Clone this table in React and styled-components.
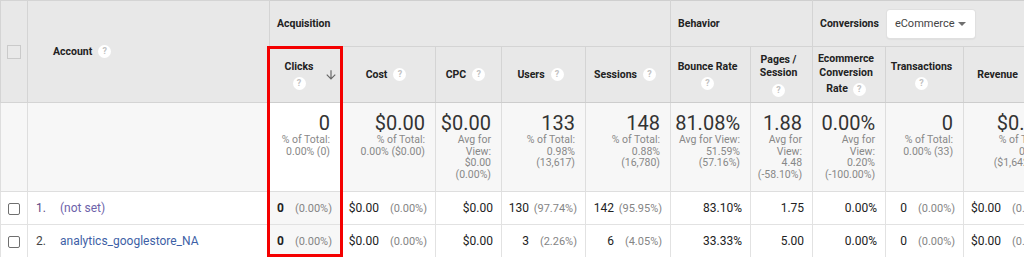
import React from "react";
import styled, { createGlobalStyle } from "styled-components";

const GlobalStyle = createGlobalStyle`
  html, body { margin: 0; padding: 0; background: #fff; }
  body { font-family: Roboto, "Liberation Sans", Arial, sans-serif; overflow: hidden; }
`;

const Frame = styled.div`
  position: relative;
  width: 1024px;
  height: 257px;
  overflow: hidden;
`;

const Table = styled.table`
  border-collapse: collapse;
  table-layout: fixed;
  width: 1057px;
  border-top: 1px solid #cfcfcf;
`;

const HeadCell = styled.th`
  background: #e8e8e8;
  border: 1px solid #d4d4d4;
  color: #222;
  font-size: 10.5px;
  font-weight: 700;
  padding: 0;
  vertical-align: middle;
`;

const GroupCell = styled(HeadCell)`
  text-align: left;
  padding-left: 7px;
  border-top: none;
`;

const GroupRow = styled.tr`
  height: 46px;
`;

const SubRow = styled.tr`
  height: 56px;
`;

const TotalRow = styled.tr`
  height: 89px;
`;

const DataRow = styled.tr`
  height: 33px;
`;

const ColHead = styled(HeadCell)`
  text-align: center;
  padding: 0 ${(p) => p.$pr || "10px"} 0 4px;
  border-bottom: 1px solid #cdcdcd;
`;

const SortHead = styled(HeadCell)`
  padding: 0 4px;
  border-bottom: 1px solid #cdcdcd;
`;

const SortInner = styled.div`
  display: flex;
  align-items: center;
`;

const SortLabel = styled.div`
  flex: 1;
  text-align: center;
`;

const Line = styled.div`
  line-height: ${(p) => p.$lh || "13px"};
  white-space: nowrap;
`;

const RateLine = styled.div`
  line-height: 16px;
  margin-top: 1px;
  white-space: nowrap;
  display: flex;
  align-items: center;
  justify-content: center;
  gap: 5px;
`;

const Help = styled.span`
  display: inline-block;
  width: 13px;
  height: 13px;
  border-radius: 50%;
  background: #fff;
  color: #c2c2c2;
  font-size: 9px;
  font-weight: 700;
  line-height: 13px;
  text-align: center;
  vertical-align: middle;
  margin-left: ${(p) => (p.$inline ? "6px" : "0")};
  margin-top: ${(p) => (p.$inline ? "-2px" : "0")};
`;

const HelpBlock = styled.div`
  margin-top: 4px;
  height: 13px;
  line-height: 13px;
`;

const CheckCell = styled(HeadCell)`
  text-align: center;
`;

const AccountHead = styled(HeadCell)`
  text-align: left;
  padding-left: 25px;
`;

const HeadBox = styled.span`
  display: inline-block;
  width: 12px;
  height: 12px;
  border: 1px solid #cacaca;
  background: #e9e9e9;
  vertical-align: middle;
`;

const ConvWrap = styled.div`
  display: flex;
  align-items: center;
  gap: 8px;
`;

const Dropdown = styled.div`
  display: flex;
  align-items: center;
  justify-content: space-between;
  width: 88px;
  height: 28px;
  box-sizing: border-box;
  padding: 0 9px 0 8px;
  background: #fff;
  border-radius: 3px;
  box-shadow: 0 0 0 1px #e0e0e0, 0 1px 2px rgba(0, 0, 0, 0.12);
  font-size: 11px;
  font-weight: 400;
  color: #444;
`;

const Caret = styled.span`
  width: 0;
  height: 0;
  border-left: 4px solid transparent;
  border-right: 4px solid transparent;
  border-top: 4px solid #6f6f6f;
`;

const TotalCell = styled.td`
  background: ${(p) => (p.$sorted ? "#fff" : "#f7f7f7")};
  border-left: 1px solid #dedede;
  border-right: 1px solid #dedede;
  border-bottom: 1px solid #dedede;
  text-align: right;
  vertical-align: top;
  padding: 9px ${(p) => (p.$sorted ? "12px" : "10px")} 0 4px;
`;

const Big = styled.div`
  font-size: 20px;
  line-height: 22px;
  color: #333;
  white-space: nowrap;
`;

const Sub = styled.div`
  font-size: 10.5px;
  line-height: 11.6px;
  color: #888;
  white-space: nowrap;
`;

const DataCell = styled.td`
  background: ${(p) => (p.$sorted ? "#f7f7f7" : "#fff")};
  border: 1px solid #e2e2e2;
  text-align: right;
  vertical-align: middle;
  padding: 0 ${(p) => (p.$sorted ? "10px" : "8px")} 0 4px;
  font-size: 12px;
  color: #222;
  white-space: nowrap;
`;

const Val = styled.span`
  font-weight: ${(p) => (p.$bold ? 700 : 400)};
`;

const Pct = styled.span`
  display: inline-block;
  min-width: 46px;
  margin-left: 2px;
  text-align: right;
  font-size: 11px;
  color: #858585;
`;

const CheckData = styled.td`
  border: 1px solid #e2e2e2;
  text-align: center;
  vertical-align: middle;
  padding: 0;
`;

const RowBox = styled.span`
  display: inline-block;
  width: 10px;
  height: 10px;
  border: 1px solid #6f6f6f;
  border-radius: 2px;
  background: #fff;
  vertical-align: middle;
`;

const AccountData = styled.td`
  border: 1px solid #e2e2e2;
  vertical-align: middle;
  padding: 0 0 0 8px;
  font-size: 12px;
  white-space: nowrap;
`;

const Num = styled.span`
  display: inline-block;
  width: 24px;
  color: ${(p) => p.$color};
`;

const Link = styled.a`
  color: ${(p) => p.$color};
  text-decoration: none;
`;

const BlankTotal = styled.td`
  background: #f7f7f7;
  border: 1px solid #dedede;
  border-top: none;
`;

const RedBox = styled.div`
  position: absolute;
  left: 267px;
  top: 46px;
  width: 76px;
  height: 211px;
  box-sizing: border-box;
  border: 3px solid #f40000;
  pointer-events: none;
`;

const ArrowDown = () => (
  <svg width="14" height="14" viewBox="0 0 24 24" fill="#666">
    <path d="M20 12l-1.41-1.41L13 16.17V4h-2v12.17l-5.58-5.59L4 12l8 8 8-8z" />
  </svg>
);

const cols = [
  { w: 73, key: "clicks", sorted: true, total: ["0", "% of Total:", "0.00% (0)"], rows: [["0", "(0.00%)"], ["0", "(0.00%)"]] },
  { w: 93, key: "cost", total: ["$0.00", "% of Total:", "0.00% ($0.00)"], rows: [["$0.00", "(0.00%)"], ["$0.00", "(0.00%)"]] },
  { w: 66, key: "cpc", total: ["$0.00", "Avg for", "View:", "$0.00", "(0.00%)"], rows: [["$0.00"], ["$0.00"]] },
  { w: 84, key: "users", total: ["133", "% of Total:", "0.98%", "(13,617)"], rows: [["130", "(97.74%)"], ["3", "(2.26%)"]] },
  { w: 85, key: "sessions", total: ["148", "% of Total:", "0.88%", "(16,780)"], rows: [["142", "(95.95%)"], ["6", "(4.05%)"]] },
  { w: 80, key: "bounce", total: ["81.08%", "Avg for View:", "51.59%", "(57.16%)"], rows: [["83.10%"], ["33.33%"]] },
  { w: 62, key: "pages", total: ["1.88", "Avg for", "View:", "4.48", "(-58.10%)"], rows: [["1.75"], ["5.00"]] },
  { w: 73, key: "ecr", total: ["0.00%", "Avg for", "View:", "0.20%", "(-100.00%)"], rows: [["0.00%"], ["0.00%"]] },
  { w: 78, key: "trans", total: ["0", "% of Total:", "0.00% (33)"], rows: [["0", "(0.00%)"], ["0", "(0.00%)"]] },
  { w: 94, key: "revenue", total: ["$0.00", "% of Total:", "0.00%", "($1,642.88)"], rows: [["$0.00", "(0.00%)"], ["$0.00", "(0.00%)"]] },
];

const accounts = [
  { n: "1.", name: "(not set)", numColor: "#5e4a86", color: "#6d62aa" },
  { n: "2.", name: "analytics_googlestore_NA", numColor: "#444", color: "#3e5fa6" },
];

export default function App() {
  return (
    <Frame>
      <GlobalStyle />
      <Table>
        <colgroup>
          <col style={{ width: 27 }} />
          <col style={{ width: 242 }} />
          {cols.map((c) => (
            <col key={c.key} style={{ width: c.w }} />
          ))}
        </colgroup>
        <thead>
          <GroupRow>
            <CheckCell rowSpan={2}>
              <HeadBox />
            </CheckCell>
            <AccountHead rowSpan={2}>
              Account
              <Help $inline>?</Help>
            </AccountHead>
            <GroupCell colSpan={5}>Acquisition</GroupCell>
            <GroupCell colSpan={2}>Behavior</GroupCell>
            <GroupCell colSpan={3}>
              <ConvWrap>
                Conversions
                <Dropdown>
                  eCommerce
                  <Caret />
                </Dropdown>
              </ConvWrap>
            </GroupCell>
          </GroupRow>
          <SubRow>
            <SortHead>
              <SortInner>
                <SortLabel>
                  <Line>Clicks</Line>
                  <HelpBlock>
                    <Help>?</Help>
                  </HelpBlock>
                </SortLabel>
                <ArrowDown />
              </SortInner>
            </SortHead>
            <ColHead>
              Cost<Help $inline>?</Help>
            </ColHead>
            <ColHead>
              CPC<Help $inline>?</Help>
            </ColHead>
            <ColHead>
              Users<Help $inline>?</Help>
            </ColHead>
            <ColHead>
              Sessions<Help $inline>?</Help>
            </ColHead>
            <ColHead>
              <Line>Bounce Rate</Line>
              <HelpBlock>
                <Help>?</Help>
              </HelpBlock>
            </ColHead>
            <ColHead>
              <Line>Pages /</Line>
              <Line>Session</Line>
              <HelpBlock>
                <Help>?</Help>
              </HelpBlock>
            </ColHead>
            <ColHead>
              <Line $lh="14px">Ecommerce</Line>
              <Line $lh="14px">Conversion</Line>
              <RateLine>
                Rate
                <Help>?</Help>
              </RateLine>
            </ColHead>
            <ColHead>
              <Line>Transactions</Line>
              <HelpBlock>
                <Help>?</Help>
              </HelpBlock>
            </ColHead>
            <ColHead $pr="30px">Revenue</ColHead>
          </SubRow>
        </thead>
        <tbody>
          <TotalRow>
            <BlankTotal />
            <BlankTotal />
            {cols.map((c) => (
              <TotalCell key={c.key} $sorted={c.sorted}>
                <Big>{c.total[0]}</Big>
                {c.total.slice(1).map((t, i) => (
                  <Sub key={i}>{t}</Sub>
                ))}
              </TotalCell>
            ))}
          </TotalRow>
          {accounts.map((a, ri) => (
            <DataRow key={a.n}>
              <CheckData>
                <RowBox />
              </CheckData>
              <AccountData>
                <Num $color={a.numColor}>{a.n}</Num>
                <Link href="#" $color={a.color}>
                  {a.name}
                </Link>
              </AccountData>
              {cols.map((c) => {
                const [v, p] = c.rows[ri];
                return (
                  <DataCell key={c.key} $sorted={c.sorted}>
                    <Val $bold={c.sorted}>{v}</Val>
                    {p && <Pct>{p}</Pct>}
                  </DataCell>
                );
              })}
            </DataRow>
          ))}
        </tbody>
      </Table>
      <RedBox />
    </Frame>
  );
}
